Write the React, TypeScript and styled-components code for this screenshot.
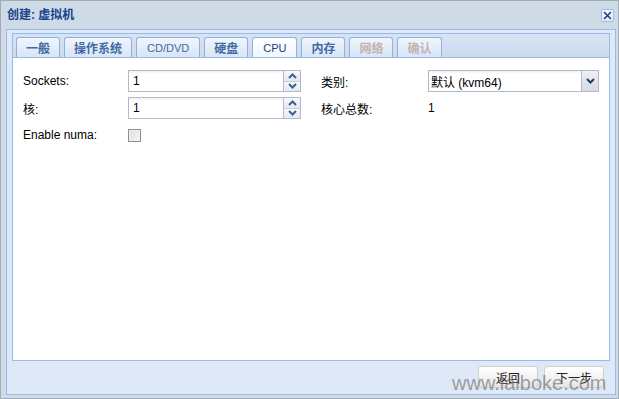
import React from 'react';
import styled, { createGlobalStyle } from 'styled-components';

const GlobalStyle = createGlobalStyle`
  html, body { margin: 0; padding: 0; background: #fff; }
  body {
    font-family: "Liberation Sans", "Noto Sans CJK SC", sans-serif;
    font-size: 12px;
    color: #000;
  }
`;

const Window = styled.div`
  position: relative;
  box-sizing: border-box;
  width: 619px;
  height: 399px;
  border: 1px solid #a2acb7;
  background: #cfdae7;
  display: flex;
  flex-direction: column;
  overflow: hidden;
`;

const Header = styled.div`
  height: 28px;
  flex: none;
  display: flex;
  align-items: center;
  justify-content: space-between;
  padding: 0 4px 0 6px;
`;

const Title = styled.div`
  font-size: 12px;
  font-weight: bold;
  color: #15428b;
  line-height: 14px;
`;

const CloseButton = styled.div`
  box-sizing: border-box;
  width: 13px;
  height: 13px;
  border: 1px solid #9dbde6;
  border-radius: 2px;
  background: linear-gradient(#f7fafd, #e3ecf7);
  display: flex;
  align-items: center;
  justify-content: center;
`;

const Body = styled.div`
  flex: 1;
  margin: 0 2px 3px 5px;
  border: 1px solid #99bbe8;
  background: #dfe8f6;
  display: flex;
  flex-direction: column;
  padding: 3px 5px 0 5px;
  min-height: 0;
`;

const Panel = styled.div`
  flex: 1;
  display: flex;
  flex-direction: column;
  min-height: 0;
`;

const TabStrip = styled.div`
  display: flex;
  gap: 4px;
  padding: 3px 3px 0 3px;
  border: 1px solid #99bbe8;
  background: linear-gradient(#d7e4f3, #cbdaee);
`;

const Tab = styled.div<{ $active?: boolean; $disabled?: boolean; $latin?: boolean }>`
  box-sizing: border-box;
  height: 20px;
  padding: 0 ${(p) => (p.$latin ? 10 : 9)}px;
  border: 1px solid #8db2e3;
  border-bottom: none;
  border-radius: 3px 3px 0 0;
  display: flex;
  align-items: center;
  background: ${(p) =>
    p.$active ? 'linear-gradient(#ffffff, #f1f6fd)' : 'linear-gradient(#f1f6fc, #d8e5f5)'};
  color: ${(p) => (p.$disabled ? '#c2b3b3' : p.$active ? '#15428b' : '#416aa3')};
  font-size: ${(p) => (p.$latin ? 11 : 12)}px;
  font-weight: ${(p) => (p.$latin ? 'normal' : 'bold')};
  white-space: nowrap;
`;

const Content = styled.div`
  flex: 1;
  background: #fff;
  border: 1px solid #99bbe8;
  border-top: none;
  padding: 12px 10px;
  display: flex;
  gap: 20px;
  align-items: flex-start;
`;

const Column = styled.div<{ $width: number }>`
  width: ${(p) => p.$width}px;
  display: flex;
  flex-direction: column;
  gap: 5px;
`;

const Row = styled.div`
  height: 22px;
  display: flex;
  align-items: center;
`;

const Label = styled.div<{ $width: number }>`
  width: ${(p) => p.$width}px;
  flex: none;
  font-size: 12px;
  color: #000;
`;

const FieldWrap = styled.div`
  flex: 1;
  display: flex;
  height: 22px;
`;

const TextInput = styled.div<{ $pad: number }>`
  flex: 1;
  box-sizing: border-box;
  height: 22px;
  border: 1px solid #b5b8c8;
  background: linear-gradient(#eef0f3 0px, #ffffff 3px, #ffffff 100%);
  padding-left: ${(p) => p.$pad}px;
  display: flex;
  align-items: center;
  font-size: 12px;
  color: #000;
`;

const Spinner = styled.div`
  width: 17px;
  box-sizing: border-box;
  height: 22px;
  border: 1px solid #b5b8c8;
  border-left: none;
  display: flex;
  flex-direction: column;
`;

const SpinHalf = styled.div<{ $bottom?: boolean }>`
  flex: 1;
  display: flex;
  align-items: center;
  justify-content: center;
  background: linear-gradient(#f6f8fb, #e4e9f0);
  border-top: ${(p) => (p.$bottom ? '1px solid #c9d0da' : 'none')};
`;

const ComboTrigger = styled.div`
  width: 17px;
  box-sizing: border-box;
  height: 22px;
  border: 1px solid #b5b8c8;
  border-left: none;
  background: linear-gradient(#eef0f3, #d7dbe1);
  display: flex;
  align-items: center;
  justify-content: center;
`;

const Value = styled.div`
  font-size: 12px;
  color: #000;
`;

const Checkbox = styled.div`
  box-sizing: border-box;
  width: 13px;
  height: 13px;
  border: 1px solid #8f8f8f;
  background: linear-gradient(135deg, #dcdcdc, #f8f8f8);
  box-shadow: inset 0 0 0 1px #f0f0f0;
`;

const Footer = styled.div`
  height: 33px;
  flex: none;
  box-sizing: border-box;
  padding: 5px 6px 6px 0;
  display: flex;
  justify-content: flex-end;
  gap: 6px;
`;

const Button = styled.div`
  box-sizing: border-box;
  width: 60px;
  height: 22px;
  border: 1px solid #cfcfcf;
  border-radius: 3px;
  background: linear-gradient(#ffffff, #f3f3f3 50%, #e6e6e6);
  display: flex;
  align-items: center;
  justify-content: center;
  font-size: 12px;
  color: #222;
`;

const Watermark = styled.div`
  position: absolute;
  left: 451px;
  top: 372px;
  font-family: "Liberation Sans", Arial, sans-serif;
  font-size: 20px;
  line-height: 20px;
  color: rgba(105, 105, 105, 0.62);
  white-space: nowrap;
  pointer-events: none;
`;

const Chevron = ({ dir, color }: { dir: 'up' | 'down'; color: string }) => (
  <svg width="9" height="6" viewBox="0 0 9 6">
    <polyline
      points={dir === 'up' ? '1,5 4.5,1.5 8,5' : '1,1 4.5,4.5 8,1'}
      fill="none"
      stroke={color}
      strokeWidth="2"
    />
  </svg>
);

const SpinField = ({ value }: { value: string }) => (
  <FieldWrap>
    <TextInput $pad={4}>{value}</TextInput>
    <Spinner>
      <SpinHalf>
        <Chevron dir="up" color="#3f5f92" />
      </SpinHalf>
      <SpinHalf $bottom>
        <Chevron dir="down" color="#3f5f92" />
      </SpinHalf>
    </Spinner>
  </FieldWrap>
);

const tabs: { label: string; active?: boolean; disabled?: boolean; latin?: boolean }[] = [
  { label: '一般' },
  { label: '操作系统' },
  { label: 'CD/DVD', latin: true },
  { label: '硬盘' },
  { label: 'CPU', active: true, latin: true },
  { label: '内存' },
  { label: '网络', disabled: true },
  { label: '确认', disabled: true },
];

export default function App() {
  return (
    <>
      <GlobalStyle />
      <Window>
        <Header>
          <Title>创建: 虚拟机</Title>
          <CloseButton>
            <svg width="9" height="9" viewBox="0 0 9 9">
              <path d="M1 1 L8 8 M8 1 L1 8" stroke="#15428b" strokeWidth="1.6" fill="none" />
            </svg>
          </CloseButton>
        </Header>
        <Body>
          <Panel>
            <TabStrip>
              {tabs.map((t) => (
                <Tab key={t.label} $active={t.active} $disabled={t.disabled} $latin={t.latin}>
                  {t.label}
                </Tab>
              ))}
            </TabStrip>
            <Content>
              <Column $width={278}>
                <Row>
                  <Label $width={105}>Sockets:</Label>
                  <SpinField value="1" />
                </Row>
                <Row>
                  <Label $width={105}>核:</Label>
                  <SpinField value="1" />
                </Row>
                <Row>
                  <Label $width={105}>Enable numa:</Label>
                  <Checkbox />
                </Row>
              </Column>
              <Column $width={278}>
                <Row>
                  <Label $width={107}>类别:</Label>
                  <FieldWrap>
                    <TextInput $pad={2}>默认 (kvm64)</TextInput>
                    <ComboTrigger>
                      <Chevron dir="down" color="#1f3b6e" />
                    </ComboTrigger>
                  </FieldWrap>
                </Row>
                <Row>
                  <Label $width={107}>核心总数:</Label>
                  <Value>1</Value>
                </Row>
              </Column>
            </Content>
          </Panel>
          <Footer>
            <Button>返回</Button>
            <Button>下一步</Button>
          </Footer>
        </Body>
        <Watermark>www.laiboke.com</Watermark>
      </Window>
    </>
  );
}
